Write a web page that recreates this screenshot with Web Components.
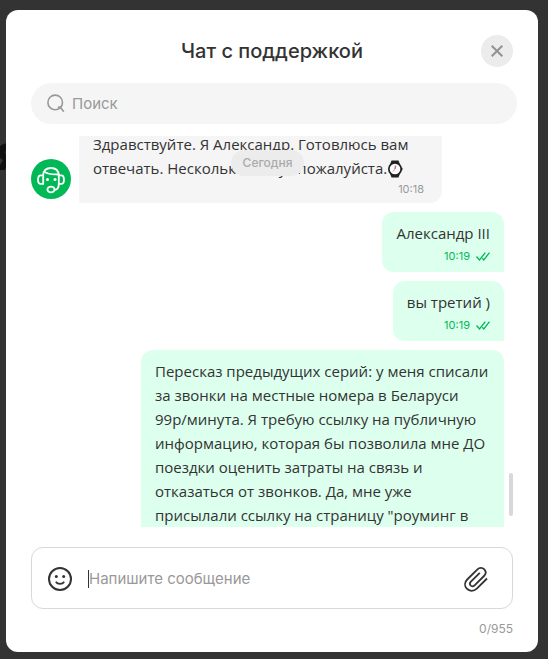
<!DOCTYPE html>
<html lang="ru">
<head>
<meta charset="utf-8">
<meta name="viewport" content="width=device-width, initial-scale=1">
<title>Чат с поддержкой</title>
<style>
	html, body{
		height: 100%;
	}
	body{
		margin: 0;
		background: #333;
		color: #333;
		font-family: "Open Sans", "Noto Sans", sans-serif;
		font-size: 15px;
		line-height: 24px;
		overflow: hidden;
	}
</style>
</head>
<body>

<chat-page>
	<chat-dialog heading="Чат с поддержкой">
		<chat-search slot="search"></chat-search>
		<chat-history day="Сегодня" position="13">
			<chat-message from="agent" time="10:18">Здравствуйте. Я Александр. Готовлюсь вам отвечать. Несколько минут пожалуйста.<watch-emoji></watch-emoji></chat-message>
			<chat-message time="10:19">Александр III</chat-message>
			<chat-message time="10:19">вы третий )</chat-message>
			<chat-message>Пересказ предыдущих серий: у меня списали за звонки на местные номера в Беларуси 99р/минута. Я требую ссылку на публичную информацию, которая бы позволила мне ДО поездки оценить затраты на связь и отказаться от звонков. Да, мне уже присылали ссылку на страницу "роуминг в</chat-message>
		</chat-history>
		<chat-composer slot="footer" limit="955"></chat-composer>
	</chat-dialog>
</chat-page>

<script>
// dark page with the dialog on top
class ChatPage extends HTMLElement {

	constructor(){
		super();
		this.shadow = this.attachShadow({mode : 'open'});
		this.shadow.innerHTML = `
			<style>
				:host{
					display: flex;
					position: relative;
					box-sizing: border-box;
					height: 100vh;
					padding: 10px 10px 7px 6px;
				}
				/* end of the page heading that sticks out from under the dialog */
				.behind{
					position: absolute;
					left: -4px;
					top: 127px;
					font: 700 50px/50px "Inter", sans-serif;
					color: #111;
				}
				::slotted(*){
					flex: 1;
					min-width: 0;
				}
			</style>
			<span class="behind" aria-hidden="true">я</span>
			<slot></slot>
		`;
	}
}

class ChatDialog extends HTMLElement {

	constructor(){
		super();
		this.shadow = this.attachShadow({mode : 'open'});
	}

	connectedCallback(){
		this.shadow.innerHTML = `
			<style>
				:host{
					display: flex;
					flex-direction: column;
					position: relative;
					box-sizing: border-box;
					padding: 25px 25px 15px;
					border-radius: 12px;
					background: #fff;
				}
				header{
					display: grid;
					grid-template-columns: 32px 1fr 32px;
					align-items: center;
				}
				h1{
					grid-column: 2;
					margin: 0;
					text-align: center;
					font: 500 20px/30px "Inter", sans-serif;
				}
				button{
					display: flex;
					align-items: center;
					justify-content: center;
					width: 32px;
					height: 32px;
					padding: 0;
					border: 0;
					border-radius: 50%;
					background: #ececec;
					cursor: pointer;
				}
				main{
					display: flex;
					flex: 1;
					min-height: 0;
					margin: 12px 0 20px;
				}
				main ::slotted(*){
					flex: 1;
				}
			</style>
			<header>
				<h1>${this.getAttribute('heading')}</h1>
				<button type="button" aria-label="Закрыть">
					<svg width="12" height="12" viewBox="0 0 12 12" fill="none" stroke="#929292" stroke-width="2">
						<path d="M.7.7l10.6 10.6M11.3.7L.7 11.3"/>
					</svg>
				</button>
			</header>
			<slot name="search"></slot>
			<main><slot></slot></main>
			<slot name="footer"></slot>
		`;
	}
}

class ChatSearch extends HTMLElement {

	constructor(){
		super();
		this.shadow = this.attachShadow({mode : 'open'});
		this.shadow.innerHTML = `
			<style>
				:host{
					display: block;
					margin: 16px -4px 0 0;
				}
				label{
					display: flex;
					align-items: center;
					gap: 7px;
					height: 41px;
					padding: 0 16px;
					border-radius: 21px;
					background: #f5f5f5;
				}
				input{
					flex: 1;
					min-width: 0;
					padding: 0;
					border: 0;
					outline: 0;
					background: none;
					font: 15px/24px "Inter", sans-serif;
					color: inherit;
				}
				input::placeholder{
					color: #999;
					opacity: 1;
				}
			</style>
			<label>
				<svg width="18" height="19" viewBox="0 0 18 19" fill="none" stroke="#999" stroke-width="1.6">
					<circle cx="8.2" cy="8.4" r="7.3"/>
					<path d="M10.800 13.200l2.400-.2 3.600 4.800"/>
				</svg>
				<input type="search" placeholder="Поиск" aria-label="Поиск">
			</label>
		`;
	}
}

class ChatHistory extends HTMLElement {

	constructor(){
		super();
		this.shadow = this.attachShadow({mode : 'open'});
	}

	connectedCallback(){
		this.shadow.innerHTML = `
			<style>
				:host{
					display: flex;
					gap: 5px;
					min-width: 0;
				}
				.view{
					display: flex;
					flex: 1;
					position: relative;
					min-width: 0;
				}
				.list{
					display: flex;
					flex-direction: column;
					flex: 1;
					gap: 9px;
					min-width: 0;
					overflow: hidden;
				}
				/* floats over the messages */
				.day{
					position: absolute;
					top: 14px;
					left: 50%;
					transform: translateX(-50%);
					padding: 1px 12px;
					border-radius: 13px;
					background: #ececec;
					font: 500 12px/24px "Inter", sans-serif;
					color: #aaa;
				}
				.track{
					display: flex;
					align-items: flex-end;
					width: 4px;
					padding-bottom: 11px;
				}
				.thumb{
					width: 4px;
					height: 43px;
					border-radius: 2px;
					background: #d8d8d8;
				}
			</style>
			<div class="view">
				<div class="list"><slot></slot></div>
				<div class="day">${this.getAttribute('day')}</div>
			</div>
			<div class="track"><div class="thumb"></div></div>
		`;
		requestAnimationFrame(() => this._restorePosition());
	}

	_restorePosition(){
		this.shadow.querySelector('.list').scrollTop = Number(this.getAttribute('position'));
	}
}

class ChatMessage extends HTMLElement {

	constructor(){
		super();
		this.shadow = this.attachShadow({mode : 'open'});
	}

	get time(){
		return this.getAttribute('time');
	}

	get fromAgent(){
		return this.getAttribute('from') === 'agent';
	}

	connectedCallback(){
		const avatar = `
			<svg class="avatar" width="40" height="40" viewBox="0 0 40 40" fill="none" stroke="#fff" stroke-width="1.8" stroke-linecap="round" stroke-linejoin="round">
				<circle cx="20" cy="20" r="20" fill="#00b956" stroke="none"/>
				<path d="M12.200 16.300h-2.400c-2 0-2.800 1.200-2.800 4.400s.8 4.200 2.800 4.200h2.400zM27.800 16.300h2.400c2 0 2.800 1.200 2.800 4.400s-.8 4.200-2.800 4.200h-2.400z"/>
				<path d="M12.200 16.300c.3-4.600 3-7.300 7.800-7.300s7.500 2.700 7.800 7.300"/>
				<path d="M13.800 12.900c3.500 2.900 7.800 2.400 13.800 2.600"/>
				<path d="M27.800 24.900c0 3.600-1.200 5.700-4.300 6"/>
				<ellipse cx="20" cy="30.500" rx="3.600" ry="2.800"/>
				<circle cx="16.500" cy="20.500" r="1.500" fill="#fff" stroke="none"/>
				<circle cx="24" cy="20.500" r="1.500" fill="#fff" stroke="none"/>
			</svg>`;
		const ticks = `
			<svg width="14" height="9" viewBox="0 0 14 9" fill="none" stroke="#00b956" stroke-width="1.3">
				<path d="M.5 4.500l3 3.400L9.300.6M6.300 6.300l1.500 1.600L13.500.6"/>
			</svg>`;

		this.shadow.innerHTML = `
			<style>
				:host{
					display: flex;
					flex: none;
					align-items: flex-end;
					justify-content: flex-end;
				}
				:host([from="agent"]){
					justify-content: flex-start;
					gap: 8px;
				}
				.avatar{
					flex: none;
					margin-bottom: 4px;
				}
				.bubble{
					box-sizing: border-box;
					max-width: 363px;
					padding: 9px 14px;
					border-radius: 12px 12px 0 12px;
					background: #dfe;
				}
				:host([from="agent"]) .bubble{
					padding-bottom: 7px;
					border-radius: 12px 12px 12px 0;
					background: #f5f5f5;
				}
				.meta{
					display: flex;
					align-items: center;
					justify-content: flex-end;
					gap: 6px;
					margin-top: 4px;
					font: 11px/14px "Inter", sans-serif;
					color: #00b956;
				}
				:host([from="agent"]) .meta{
					margin: 2px 4px 0 0;
					color: #999;
				}
			</style>
			${this.fromAgent ? avatar : ''}
			<div class="bubble">
				<div><slot></slot></div>
				${this.time ? `<div class="meta"><time>${this.time}</time>${this.fromAgent ? '' : ticks}</div>` : ''}
			</div>
		`;
	}
}

class WatchEmoji extends HTMLElement {

	constructor(){
		super();
		this.shadow = this.attachShadow({mode : 'open'});
		this.shadow.innerHTML = `
			<style>
				:host{
					display: inline-block;
					height: 18px;
					vertical-align: -4px;
				}
				svg{
					display: block;
				}
			</style>
			<svg width="16" height="18" viewBox="0 0 16 18">
				<path d="M4.500.5h7l1.500 4v9l-1.500 4h-7L3 13.500v-9z" fill="#222"/>
				<rect x="13" y="7.500" width="2.500" height="3" rx="1" fill="#222"/>
				<circle cx="8" cy="9" r="7" fill="#222"/>
				<circle cx="8" cy="9" r="5.300" fill="#fff"/>
				<path d="M8 5.500v3.500l-2 2.500" fill="none" stroke="#aaa"/>
				<path d="M8 9l1-3.500" stroke="#e33" stroke-width=".8"/>
			</svg>
		`;
	}
}

class ChatComposer extends HTMLElement {

	constructor(){
		super();
		this.shadow = this.attachShadow({mode : 'open'});
	}

	connectedCallback(){
		this.shadow.innerHTML = `
			<style>
				:host{
					display: block;
				}
				form{
					display: flex;
					align-items: center;
					box-sizing: border-box;
					height: 62px;
					padding: 2px 23px 0 16px;
					border: 1px solid #d8d8d8;
					border-radius: 12px;
				}
				button{
					flex: none;
					display: flex;
					padding: 0;
					border: 0;
					background: none;
					cursor: pointer;
				}
				input{
					flex: 1;
					min-width: 0;
					height: 18px;
					margin: 0 16px;
					padding: 0;
					border: 0;
					border-left: 1px solid #333;
					outline: 0;
					background: none;
					font: 15px/18px "Inter", sans-serif;
					color: inherit;
					caret-color: transparent;
				}
				input::placeholder{
					color: #999;
					opacity: 1;
				}
				.counter{
					margin-top: 12px;
					text-align: right;
					font: 12px/16px "Inter", sans-serif;
					color: #999;
				}
			</style>
			<form>
				<button type="button" aria-label="Смайлики">
					<svg width="24" height="24" viewBox="0 0 24 24" fill="none" stroke="#333" stroke-width="2">
						<circle cx="12" cy="12" r="11"/>
						<path d="M7.800 14.800c1.800 2.800 6.600 2.800 8.400 0" stroke-width="1.800"/>
						<circle cx="8.300" cy="9.500" r="1.500" fill="#333" stroke="none"/>
						<circle cx="15.700" cy="9.500" r="1.500" fill="#333" stroke="none"/>
					</svg>
				</button>
				<input type="text" maxlength="${this.getAttribute('limit')}" placeholder="Напишите сообщение" aria-label="Сообщение">
				<button type="button" aria-label="Прикрепить файл">
					<svg width="26" height="26" viewBox="0 0 26 26" fill="none" stroke="#333" stroke-width="1.800">
						<path d="M24 12.500L13.800 22.600C10.800 25.600 6.300 25.500 3.800 22.700C1.300 20 1.500 16.200 4.200 13.500L14.200 3.600C16.400 1.400 19.500 1.500 21.300 3.400C23.100 5.300 23 8 21 10L11.600 19.300C10.200 20.700 8.600 20.600 7.600 19.500C6.600 18.400 6.700 16.900 7.900 15.700L16.800 6.900"/>
					</svg>
				</button>
			</form>
			<div class="counter"></div>
		`;
		this.shadow.querySelector('input').addEventListener('input', this._updateCounter.bind(this));
		this._updateCounter();
	}

	_updateCounter(){
		let length = this.shadow.querySelector('input').value.length;
		this.shadow.querySelector('.counter').textContent = length + '/' + this.getAttribute('limit');
	}
}

window.customElements.define('chat-page', ChatPage);
window.customElements.define('chat-dialog', ChatDialog);
window.customElements.define('chat-search', ChatSearch);
window.customElements.define('chat-history', ChatHistory);
window.customElements.define('chat-message', ChatMessage);
window.customElements.define('watch-emoji', WatchEmoji);
window.customElements.define('chat-composer', ChatComposer);
</script>
</body>
</html>
